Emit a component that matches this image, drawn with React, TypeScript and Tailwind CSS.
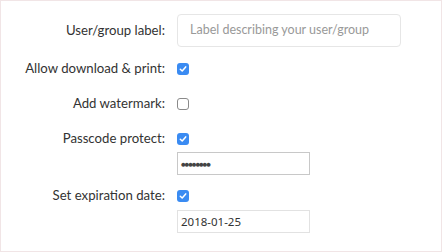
export default function App() {
  const font = { fontFamily: "Lato, 'Open Sans', sans-serif" };
  const Check = ({ on }: { on: boolean }) =>
    on ? (
      <span className="flex h-[12px] w-[12px] items-center justify-center rounded-[3px] bg-[#3a8bf2]">
        <svg width="8" height="8" viewBox="0 0 8 8" fill="none">
          <path d="M1.3 4.2 L3.2 6 L6.7 1.9" stroke="white" strokeWidth="1.5" strokeLinecap="round" strokeLinejoin="round" />
        </svg>
      </span>
    ) : (
      <span className="block h-[12px] w-[12px] rounded-[3px] border border-[#8a8a8a] bg-white" />
    );

  return (
    <div className="h-[252px] w-[442px] border border-[#f1e5e6] bg-white text-[13.2px] text-[#333]" style={font}>
      <div className="grid grid-cols-[164px_1fr] gap-x-3 pt-[13px]">
        <label className="flex h-[33px] items-center justify-end whitespace-nowrap">User/group label:</label>
        <div className="flex h-[33px] w-[224px] items-center whitespace-nowrap rounded-[4px] border border-[#e6e6e6] px-[12px] text-[12.5px] text-[#999]">
          Label describing your user/group
        </div>

        <label className="mt-[12px] flex h-[20px] items-center justify-end whitespace-nowrap">Allow download &amp; print:</label>
        <div className="mt-[12px] flex h-[20px] items-center"><Check on /></div>

        <label className="mt-[15px] flex h-[20px] items-center justify-end whitespace-nowrap">Add watermark:</label>
        <div className="mt-[15px] flex h-[20px] items-center"><Check on={false} /></div>

        <label className="mt-[15px] flex h-[20px] items-center justify-end whitespace-nowrap">Passcode protect:</label>
        <div className="mt-[15px] flex h-[20px] items-center"><Check on /></div>

        <div />
        <div className="mt-[3px] flex h-[23px] w-[133px] items-center border border-[#c8c8c8] px-[3px] text-[8px] tracking-[-1.2px] text-[#444]">
          ●●●●●●●●
        </div>

        <label className="mt-[11px] flex h-[20px] items-center justify-end whitespace-nowrap">Set expiration date:</label>
        <div className="mt-[11px] flex h-[20px] items-center"><Check on /></div>

        <div />
        <div
          className="mt-[4px] flex h-[23px] w-[133px] items-center border border-[#e2e2e2] px-[3px] text-[11.5px] text-[#333]"
          style={{ fontFamily: "'Noto Sans', 'DejaVu Sans', sans-serif" }}
        >
          2018-01-25
        </div>
      </div>
    </div>
  );
}
